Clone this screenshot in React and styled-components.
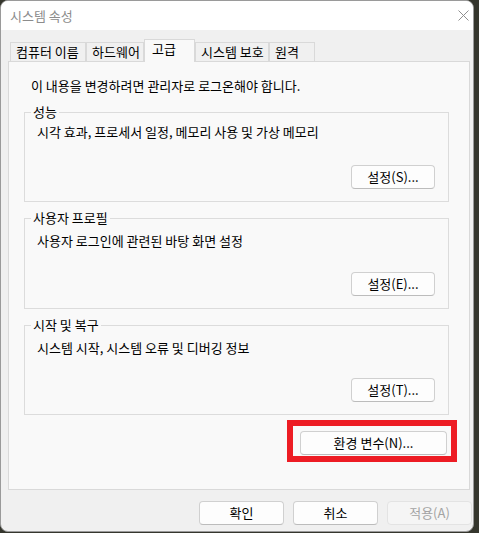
import React from "react";
import styled, { createGlobalStyle } from "styled-components";

const GlobalStyle = createGlobalStyle`
  html, body {
    margin: 0;
    padding: 0;
    background: #35362d;
  }
  body {
    font-family: "Noto Sans CJK KR", "Noto Sans", sans-serif;
    font-size: 13px;
    color: #000;
  }
  * { box-sizing: border-box; }
`;

const Window = styled.div`
  width: 474px;
  height: 532px;
  border: 1px solid #9a9a9a;
  border-radius: 8px;
  overflow: hidden;
  background: #f0f0f0;
  display: flex;
  flex-direction: column;
`;

const TitleBar = styled.div`
  height: 29px;
  background: #ffffff;
  display: flex;
  align-items: center;
  justify-content: space-between;
  padding: 0 4px 0 9px;
  flex-shrink: 0;
`;

const Title = styled.span`
  color: #8c8c8c;
  font-size: 13px;
  line-height: 16px;
`;

const CloseIcon = styled.svg`
  width: 11px;
  height: 11px;
`;

const Body = styled.div`
  flex: 1;
  display: flex;
  flex-direction: column;
  padding-top: 9px;
`;

const TabRow = styled.div`
  display: flex;
  align-items: flex-end;
  margin-left: 9px;
  height: 22px;
  position: relative;
  z-index: 1;
`;

const Tab = styled.div`
  width: ${(p) => p.$w}px;
  height: ${(p) => (p.$active ? 23 : 19)}px;
  margin-bottom: ${(p) => (p.$active ? -1 : 0)}px;
  border: 1px solid #d9d9d9;
  border-bottom: none;
  background: ${(p) => (p.$active ? "#f9f9f9" : "#f0f0f0")};
  padding-left: ${(p) => (p.$active ? 7 : 5)}px;
  line-height: ${(p) => (p.$active ? 18 : 17)}px;
  white-space: nowrap;
  font-size: 13px;
`;

const Panel = styled.div`
  margin: 0 3px 0 7px;
  height: 429px;
  border: 1px solid #d9d9d9;
  background: #f9f9f9;
  display: flex;
  flex-direction: column;
`;

const Intro = styled.div`
  margin: 16px 0 0 22px;
  line-height: 16px;
`;

const Group = styled.fieldset`
  margin: ${(p) => p.$top}px 20px 0 15px;
  padding: 0 0 12px 0;
  border: 1px solid #dcdcdc;
  display: flex;
  flex-direction: column;
  min-width: 0;
`;

const Legend = styled.legend`
  margin-left: 6px;
  padding: 0 2px;
  line-height: 16px;
`;

const Desc = styled.div`
  margin: ${(p) => p.$top}px 0 0 12px;
  line-height: 16px;
`;

const Button = styled.button`
  width: ${(p) => p.$w}px;
  height: 24px;
  font-family: "Noto Sans CJK KR", "Noto Sans", sans-serif;
  font-size: 13px;
  line-height: 16px;
  color: ${(p) => (p.disabled ? "#a3a3a3" : "#000")};
  background: ${(p) => (p.disabled ? "#f5f5f5" : "#fdfdfd")};
  border: 1px solid ${(p) => (p.disabled ? "#e3e3e3" : "#d0d0d0")};
  border-bottom-color: ${(p) => (p.disabled ? "#e3e3e3" : "#bcbcbc")};
  border-radius: 4px;
  padding: 0;
`;

const GroupButton = styled(Button)`
  align-self: flex-end;
  margin: ${(p) => p.$top}px 13px 0 0;
`;

const HighlightRow = styled.div`
  display: flex;
  justify-content: flex-end;
  margin: 5px 12px 0 0;
`;

const Highlight = styled.div`
  border: 6px solid #ed1c24;
  padding: 5px 4px 1px 7px;
`;

const Footer = styled.div`
  display: flex;
  justify-content: flex-end;
  gap: 9px;
  padding: 11px 1px 0 0;
`;

const groups = [
  { title: "성능", desc: "시각 효과, 프로세서 일정, 메모리 사용 및 가상 메모리", btn: "설정(S)...", top: 10, descTop: 4, btnTop: 25 },
  { title: "사용자 프로필", desc: "사용자 로그인에 관련된 바탕 화면 설정", btn: "설정(E)...", top: 8, descTop: 7, btnTop: 23 },
  { title: "시작 및 복구", desc: "시스템 시작, 시스템 오류 및 디버깅 정보", btn: "설정(T)...", top: 8, descTop: 7, btnTop: 22 },
];

const tabs = [
  { label: "컴퓨터 이름", w: 76 },
  { label: "하드웨어", w: 58 },
  { label: "고급", w: 51, active: true },
  { label: "시스템 보호", w: 74 },
  { label: "원격", w: 46 },
];

export default function App() {
  return (
    <>
      <GlobalStyle />
      <Window>
        <TitleBar>
          <Title>시스템 속성</Title>
          <CloseIcon viewBox="0 0 11 11">
            <path d="M0.5 0.5 L10.5 10.5 M10.5 0.5 L0.5 10.5" stroke="#8f8f8f" strokeWidth="1" fill="none" />
          </CloseIcon>
        </TitleBar>
        <Body>
          <TabRow>
            {tabs.map((t) => (
              <Tab key={t.label} $w={t.w} $active={t.active}>
                {t.label}
              </Tab>
            ))}
          </TabRow>
          <Panel>
            <Intro>이 내용을 변경하려면 관리자로 로그온해야 합니다.</Intro>
            {groups.map((g) => (
              <Group key={g.title} $top={g.top}>
                <Legend>{g.title}</Legend>
                <Desc $top={g.descTop}>{g.desc}</Desc>
                <GroupButton $w={84} $top={g.btnTop}>{g.btn}</GroupButton>
              </Group>
            ))}
            <HighlightRow>
              <Highlight>
                <Button $w={147}>환경 변수(N)...</Button>
              </Highlight>
            </HighlightRow>
          </Panel>
          <Footer>
            <Button $w={85}>확인</Button>
            <Button $w={85}>취소</Button>
            <Button $w={85} disabled>적용(A)</Button>
          </Footer>
        </Body>
      </Window>
    </>
  );
}
